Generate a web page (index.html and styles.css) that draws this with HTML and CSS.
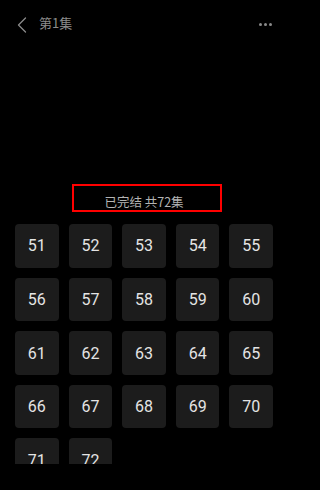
FILE: index.html
```html
<!DOCTYPE html>
<html lang="zh">
<head>
<meta charset="utf-8">
<link rel="stylesheet" href="styles.css">
</head>
<body>
<div class="page">
  <header class="header">
    <svg class="back" width="10" height="16" viewBox="0 0 10 16"><polyline points="8.5,1 1.5,8 8.5,15" fill="none" stroke="#8a8a8a" stroke-width="1.3" stroke-linecap="round" stroke-linejoin="round"/></svg>
    <span class="title">第1集</span>
    <span class="more"><i></i><i></i><i></i></span>
  </header>
  <div class="status"><span>已完结 共72集</span></div>
  <div class="grid">
    <div class="ep">51</div><div class="ep">52</div><div class="ep">53</div><div class="ep">54</div><div class="ep">55</div>
    <div class="ep">56</div><div class="ep">57</div><div class="ep">58</div><div class="ep">59</div><div class="ep">60</div>
    <div class="ep">61</div><div class="ep">62</div><div class="ep">63</div><div class="ep">64</div><div class="ep">65</div>
    <div class="ep">66</div><div class="ep">67</div><div class="ep">68</div><div class="ep">69</div><div class="ep">70</div>
    <div class="ep">71</div><div class="ep">72</div>
  </div>
</div>
</body>
</html>
```
FILE: styles.css
```css
html, body {
  margin: 0;
  padding: 0;
  background: #000;
}
body {
  font-family: Roboto, "Noto Sans CJK SC", sans-serif;
  width: 287px;
  height: 490px;
  overflow: hidden;
}
.header {
  height: 48px;
  display: flex;
  align-items: center;
  padding: 0 15px 0 17px;
}
.back {
  margin-top: 2px;
}
.title {
  margin-left: 12px;
  font-family: "Noto Sans CJK SC", sans-serif;
  font-size: 13px;
  line-height: 16px;
  color: #8c8c8c;
  margin-top: -3px;
}
.more {
  margin-left: auto;
  display: flex;
  gap: 2px;
  margin-top: 1px;
}
.more i {
  width: 3px;
  height: 3px;
  border-radius: 50%;
  background: #8a8a8a;
}
.status {
  margin: 136px 0 0 72px;
  width: 150px;
  height: 28px;
  box-sizing: border-box;
  border: 2px solid #ff0000;
  display: flex;
  align-items: flex-end;
  justify-content: center;
  padding: 0 6px 1px 0;
  font-family: "Noto Sans CJK SC", sans-serif;
  font-size: 12.5px;
  line-height: 14px;
  color: #b4b4b4;
}
.grid {
  margin-top: 12px;
  padding: 0 14px 0 15px;
  display: grid;
  grid-template-columns: repeat(5, 1fr);
  gap: 10px;
  height: 240px;
  overflow: hidden;
  align-content: start;
}
.ep {
  aspect-ratio: 1 / 1;
  background: #1c1c1c;
  border-radius: 4px;
  display: flex;
  align-items: center;
  justify-content: center;
  font-size: 16px;
  color: #e4e4e4;
}
```
